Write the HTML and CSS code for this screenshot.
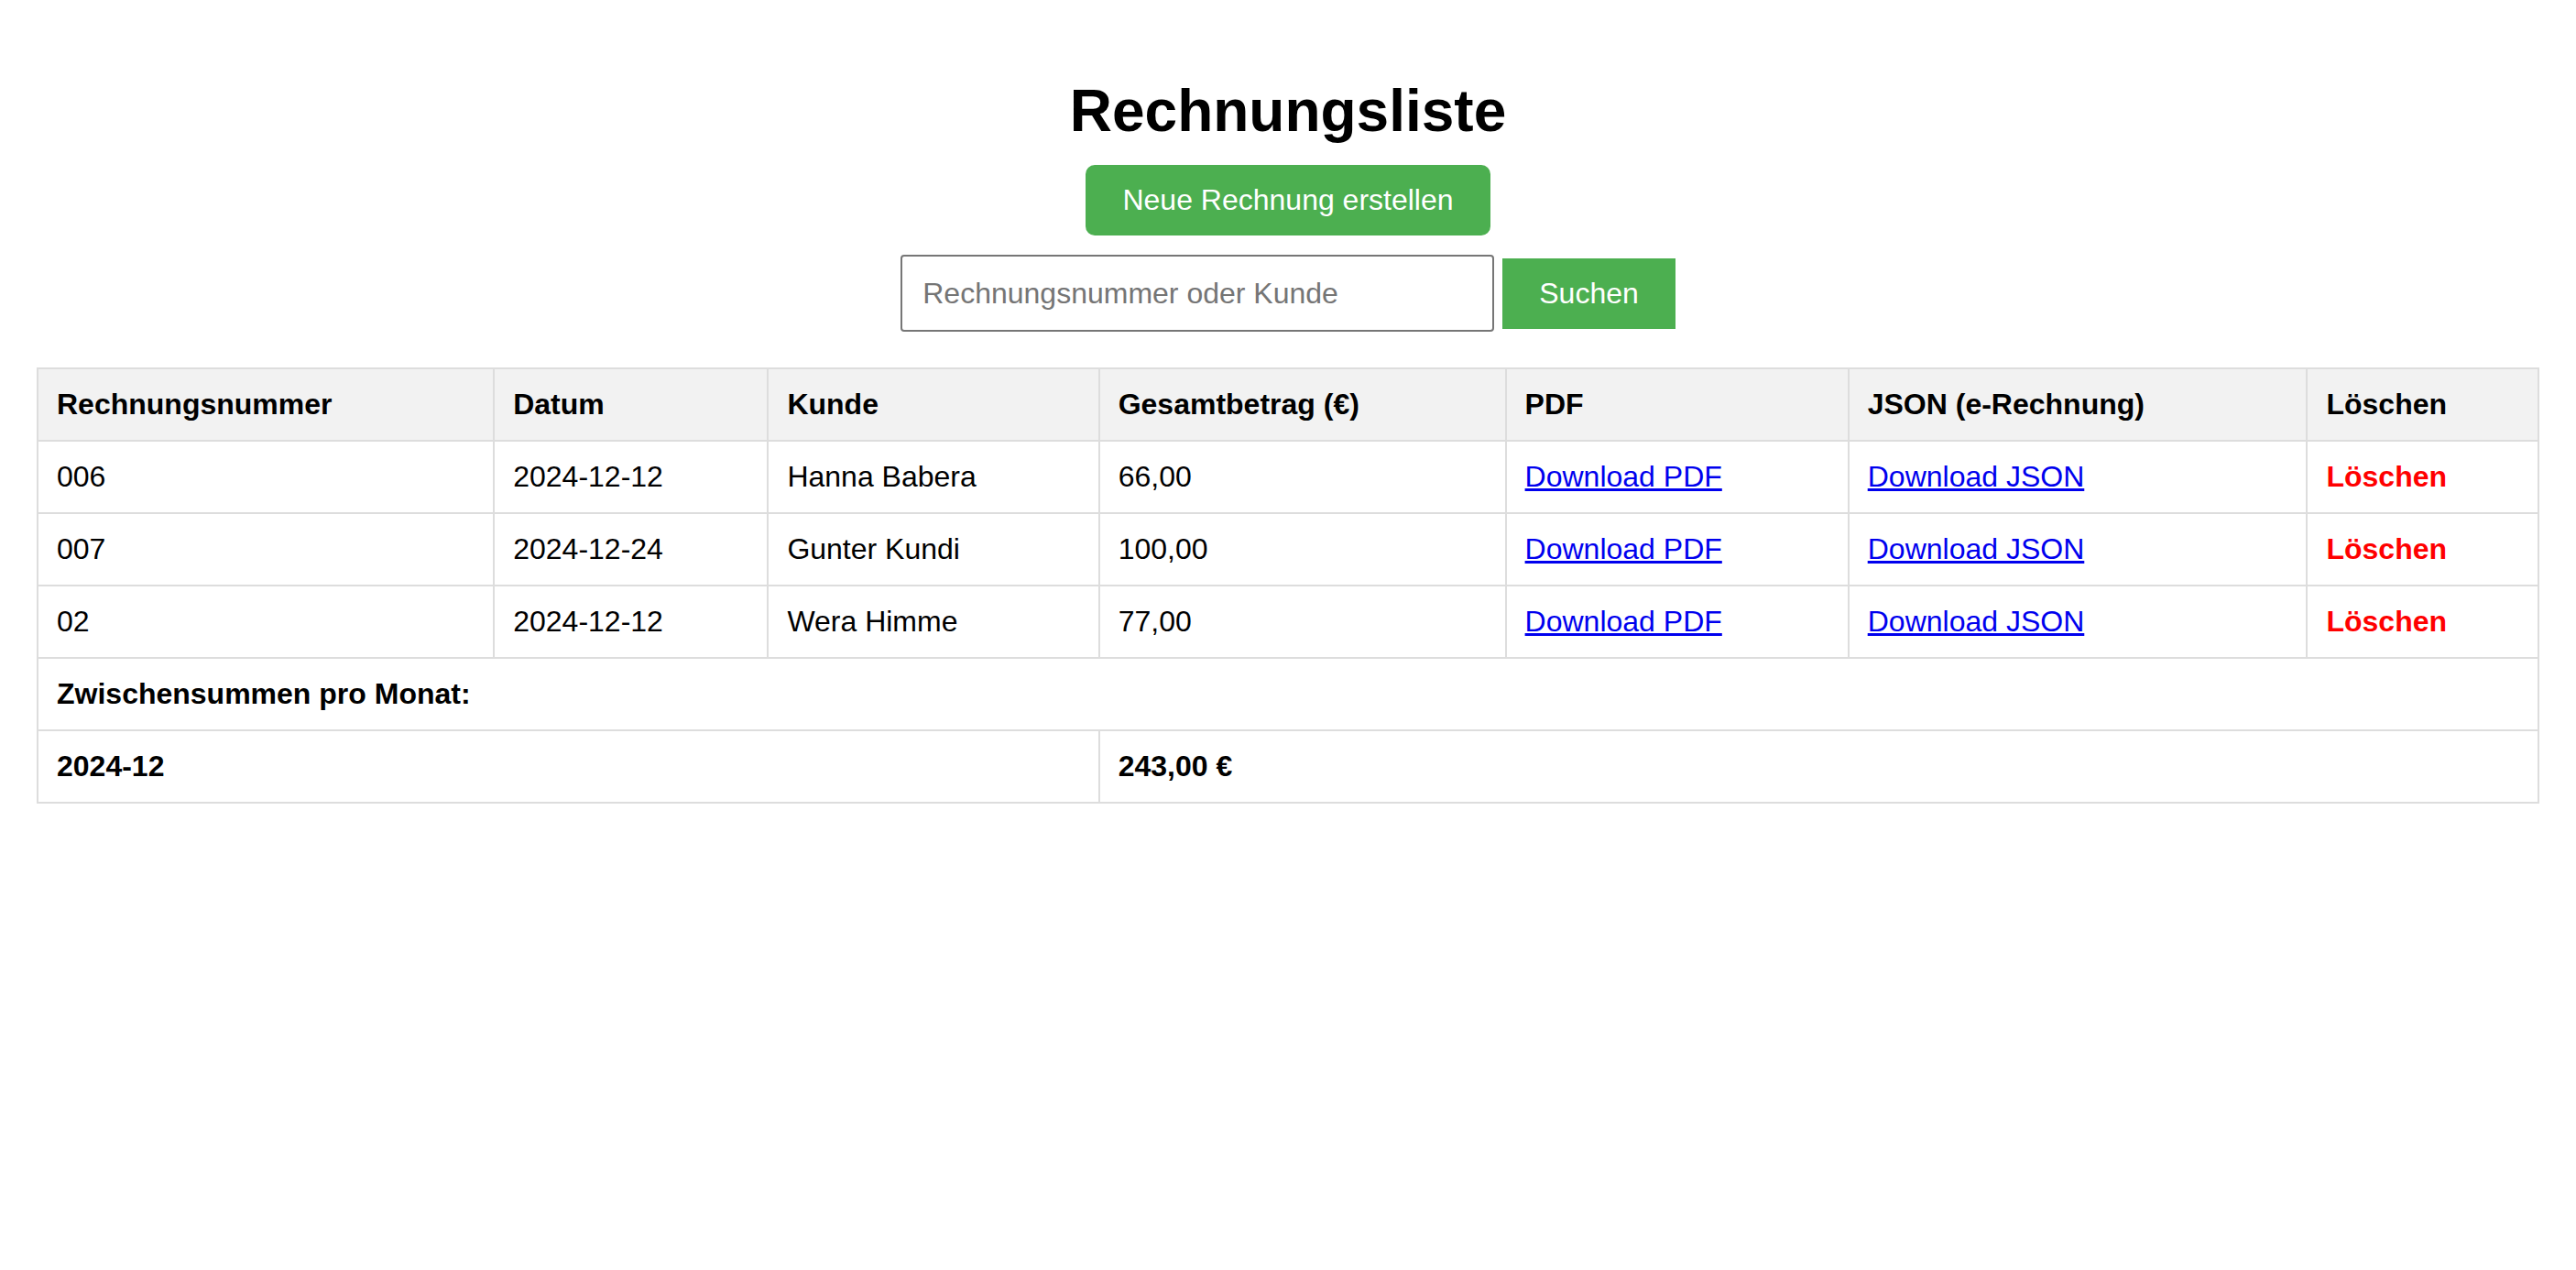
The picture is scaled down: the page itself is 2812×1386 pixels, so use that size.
FILE: index.html
```html
<!DOCTYPE html>
<html lang="de">
<head>
<meta charset="utf-8">
<title>Rechnungsliste</title>
<link rel="stylesheet" href="styles.css">
</head>
<body>
<div class="page">
  <h1 class="title">Rechnungsliste</h1>
  <a class="btn-new" href="#">Neue Rechnung erstellen</a>
  <form class="search">
    <input class="search-input" type="text" placeholder="Rechnungsnummer oder Kunde">
    <button class="search-btn" type="button">Suchen</button>
  </form>
  <table class="invoices">
    <thead>
      <tr>
        <th>Rechnungsnummer</th>
        <th>Datum</th>
        <th>Kunde</th>
        <th>Gesamtbetrag (€)</th>
        <th>PDF</th>
        <th>JSON (e-Rechnung)</th>
        <th>Löschen</th>
      </tr>
    </thead>
    <tbody>
      <tr>
        <td>006</td>
        <td>2024-12-12</td>
        <td>Hanna Babera</td>
        <td>66,00</td>
        <td><a class="link" href="#">Download PDF</a></td>
        <td><a class="link" href="#">Download JSON</a></td>
        <td><span class="delete">Löschen</span></td>
      </tr>
      <tr>
        <td>007</td>
        <td>2024-12-24</td>
        <td>Gunter Kundi</td>
        <td>100,00</td>
        <td><a class="link" href="#">Download PDF</a></td>
        <td><a class="link" href="#">Download JSON</a></td>
        <td><span class="delete">Löschen</span></td>
      </tr>
      <tr>
        <td>02</td>
        <td>2024-12-12</td>
        <td>Wera Himme</td>
        <td>77,00</td>
        <td><a class="link" href="#">Download PDF</a></td>
        <td><a class="link" href="#">Download JSON</a></td>
        <td><span class="delete">Löschen</span></td>
      </tr>
      <tr>
        <td colspan="7" class="strong">Zwischensummen pro Monat:</td>
      </tr>
      <tr>
        <td colspan="3" class="strong">2024-12</td>
        <td colspan="4" class="strong">243,00 €</td>
      </tr>
    </tbody>
  </table>
</div>
</body>
</html>
```

FILE: styles.css
```css
html, body {
  margin: 0;
  padding: 0;
  background: #ffffff;
}

body {
  font-family: "Liberation Sans", Arial, sans-serif;
  font-size: 32px;
  color: #000000;
}

.page {
  display: flex;
  flex-direction: column;
  align-items: center;
  padding: 0 40px;
}

.title {
  font-size: 64px;
  font-weight: bold;
  line-height: normal;
  margin: 84px 0 22px;
}

.btn-new {
  display: inline-block;
  background: #4caf50;
  color: #ffffff;
  text-decoration: none;
  font-size: 32px;
  line-height: normal;
  padding: 20px 40px;
  border-radius: 10px;
  margin-bottom: 21px;
}

.search {
  display: flex;
  align-items: center;
  gap: 9px;
  margin: 0 0 39px;
}

.search-input {
  box-sizing: border-box;
  width: 648px;
  height: 84px;
  padding: 0 22px;
  border: 2px solid #767676;
  border-radius: 4px;
  font-family: "Liberation Sans", Arial, sans-serif;
  font-size: 32px;
  color: #000000;
  background: #ffffff;
  outline: none;
}

.search-input::placeholder {
  color: #757575;
}

.search-btn {
  box-sizing: border-box;
  height: 77px;
  padding: 0 40px;
  border: none;
  border-radius: 0;
  background: #4caf50;
  color: #ffffff;
  font-family: "Liberation Sans", Arial, sans-serif;
  font-size: 32px;
  line-height: normal;
}

.invoices {
  width: 100%;
  border-collapse: collapse;
}

.invoices th,
.invoices td {
  border: 2px solid #dddddd;
  padding: 20px;
  text-align: left;
  font-size: 32px;
  line-height: normal;
}

.invoices th {
  background: #f2f2f2;
  font-weight: bold;
}

.link {
  color: #0000ee;
  text-decoration: underline;
}

.delete {
  color: #ff0000;
  font-weight: bold;
}

.strong {
  font-weight: bold;
}
```
